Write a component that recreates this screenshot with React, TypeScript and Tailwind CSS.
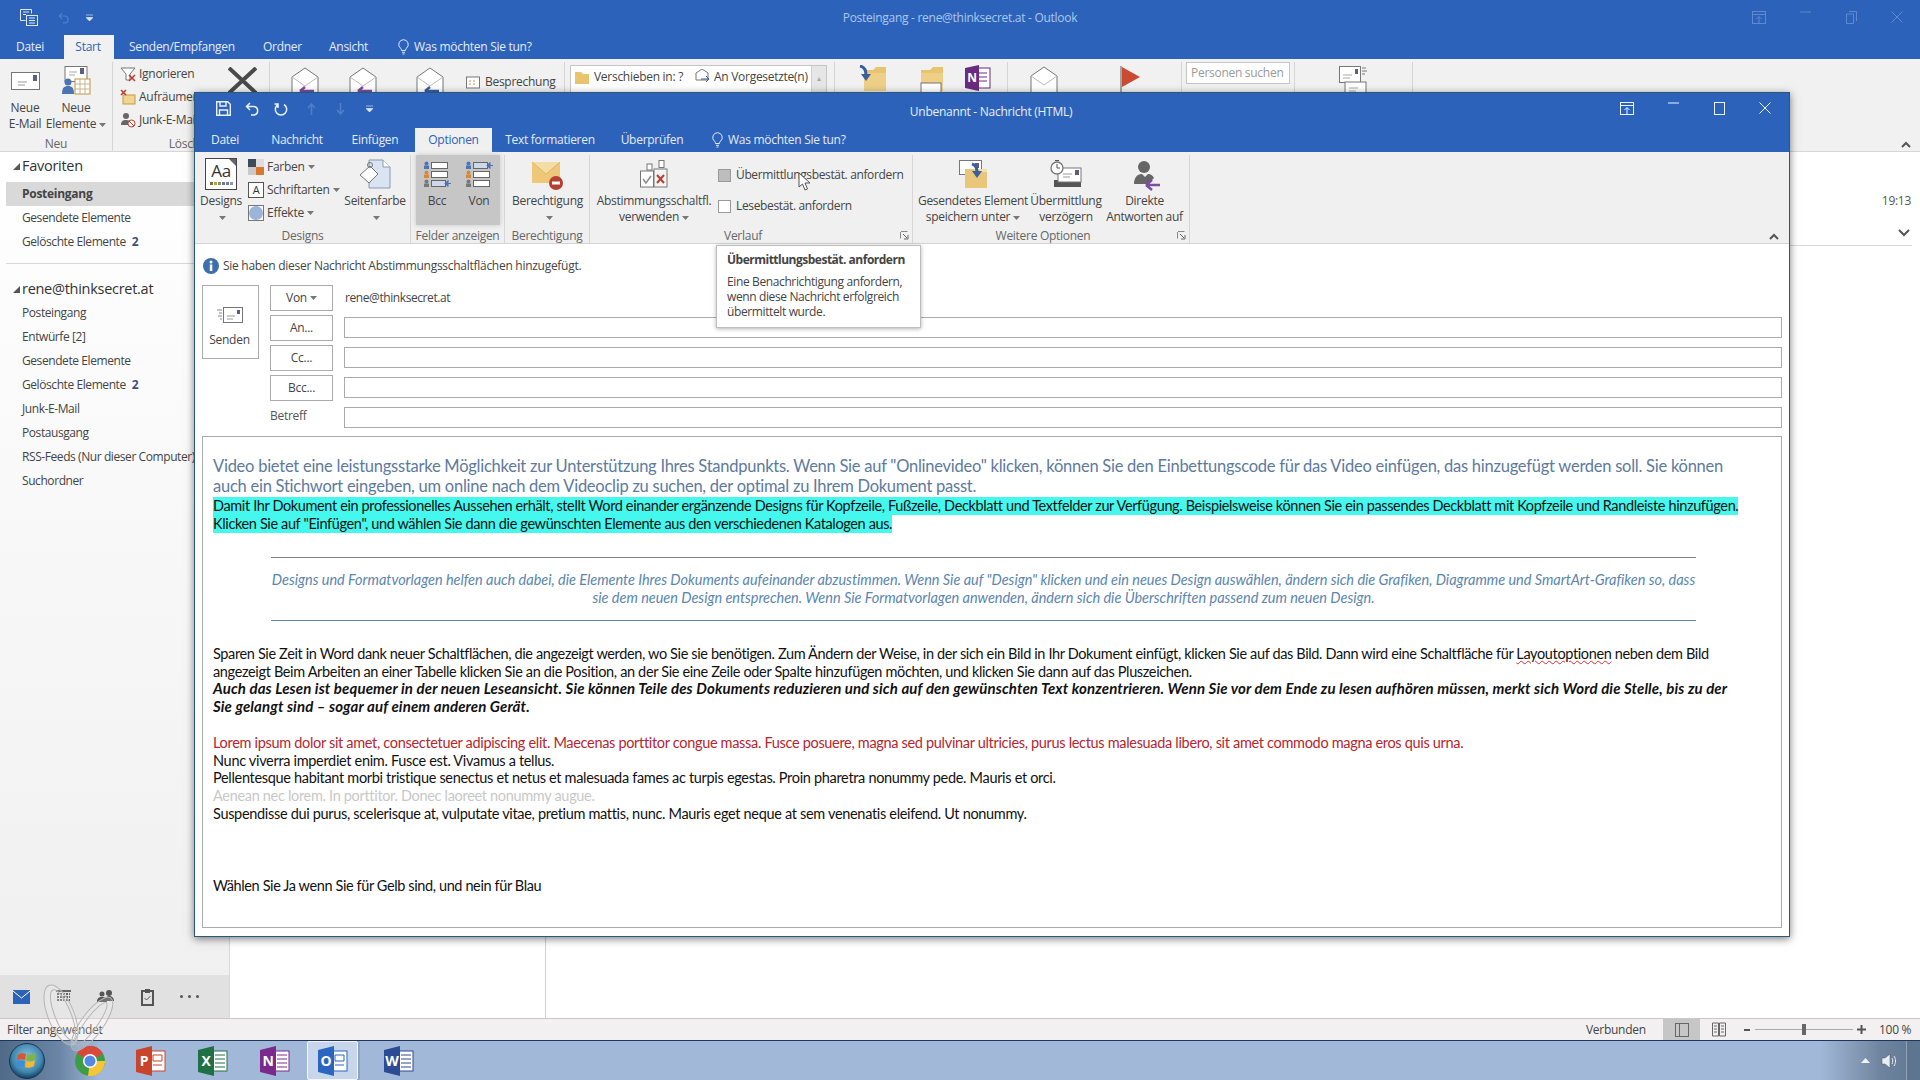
import { ReactNode } from 'react';

const ui = "font-['Open_Sans',sans-serif] text-[12px] tracking-[-0.28px]";

const Caret = () => (
  <svg width="7" height="4" viewBox="0 0 7 4" className="inline-block ml-[3px] align-middle"><path d="M0 0h7L3.500 4z" fill="#777" /></svg>
);

const RibbonGroup = ({ w, label, labelClass = '', launcher, children }: { w: string; label?: string; labelClass?: string; launcher?: boolean; children: ReactNode }) => (
  <div className={`${w} shrink-0 mt-[3px] border-r border-[#d6d6d6] flex flex-col`}>
    <div className="flex-1 flex min-h-0">{children}</div>
    <div className={`relative h-[16px] leading-[18px] text-center text-[#666] whitespace-nowrap ${labelClass}`}>
      {label}
      {launcher && (
        <svg width="9" height="9" viewBox="0 0 9 9" className="absolute right-[3px] top-[4px]"><path d="M1 .5h6.500M.5 1v6.500" stroke="#888" fill="none" /><path d="M3 3l4 4M8 4v4H4" stroke="#666" fill="none" /></svg>
      )}
    </div>
  </div>
);

const BigButton = ({ w, icon, line1, line2, caret }: { w: string; icon: ReactNode; line1: string; line2?: string; caret?: boolean }) => (
  <div className={`${w} shrink-0 flex flex-col items-center text-[#444] leading-[16px] whitespace-nowrap`}>
    <div className="h-[38px] flex items-center justify-center">{icon}</div>
    <div>{line1}</div>
    <div>{line2}{caret && <Caret />}</div>
  </div>
);

const SmallRow = ({ icon, text, caret }: { icon: ReactNode; text: string; caret?: boolean }) => (
  <div className="h-[23px] flex items-center gap-[3px] text-[#444] whitespace-nowrap">
    {icon}<span>{text}{caret && <Caret />}</span>
  </div>
);

/* ---- ribbon drawings ---- */
const Envelope = ({ w = 29, h = 18 }: { w?: number; h?: number }) => (
  <svg width={w} height={h} viewBox="0 0 29 18">
    <rect x=".5" y=".5" width="28" height="17" fill="#fff" stroke="#757575" />
    <path d="M7 10h9M7 13h7" stroke="#999" />
    <rect x="22" y="3" width="4" height="6" fill="#5a5f80" />
  </svg>
);

const OpenEnvelope = ({ arrow }: { arrow?: string }) => (
  <svg width="30" height="28" viewBox="0 0 30 28">
    <path d="M2 10 15 1l13 9v17H2z" fill="#fff" stroke="#777" />
    <path d="M2 10l13 9 13-9" fill="none" stroke="#bbb" />
    {arrow && <path d="M10 24h14M10 24l5-4M10 24l5 4" stroke={arrow} strokeWidth="2.500" fill="none" />}
  </svg>
);

const Folder = ({ children }: { children?: ReactNode }) => (
  <svg width="30" height="28" viewBox="0 0 30 28">
    <path d="M6 5h9l3-3h10v24H6z" fill="#e8c46e" />
    <path d="M6 8h22v18H6z" fill="#edcf87" />
    {children}
  </svg>
);

const NeueElemente = () => (
  <svg width="30" height="30" viewBox="0 0 30 30">
    <rect x="4" y=".5" width="22" height="15" fill="#fff" stroke="#777" />
    <path d="M8 6h8M8 9h6" stroke="#aaa" />
    <rect x="19" y="2" width="4" height="6" fill="#5a5f80" />
    <rect x="14" y="13" width="15" height="15" fill="#fff" stroke="#c8953e" />
    <path d="M14 18h15M19 13v15M24 13v15M14 23h15" stroke="#c8b58b" />
    <circle cx="7" cy="16" r="3.500" fill="#4a74b4" />
    <path d="M1 28c0-6 2-8 6-8s6 2 6 8z" fill="#4a74b4" />
  </svg>
);

const Aa = () => (
  <div className="w-[32px] h-[32px] border border-[#444] bg-white relative flex flex-col items-center p-[2px]">
    <div className="text-[17px] leading-[20px] text-[#333] font-['Open_Sans',sans-serif]">Aa</div>
    <div className="flex gap-[1px] mt-[1px]">
      {['#8a6d3b', '#b8a050', '#7f9a55', '#7c6aa0', '#5b86b0', '#9a9a9a'].map((c) => <div key={c} className="w-[3px] h-[3px]" style={{ background: c }} />)}
    </div>
    <svg width="7" height="7" className="absolute right-0 top-0"><path d="M0 0h7v7z" fill="#666" /></svg>
  </div>
);

const FieldList = ({ mark }: { mark: 0 | 2 }) => {
  const rows = [1, 10, 19];
  const colors = ['#4a74b4', '#d6883a', '#777'];
  return (
    <svg width="28" height="26" viewBox="0 0 28 26">
      {rows.map((y, i) => (
        <g key={y}>
          <circle cx="3.500" cy={y + 1.500} r="2" fill={colors[i]} />
          <rect x="1" y={y + 3.500} width="5" height="3.500" fill={colors[i]} />
          <rect x="8.500" y={y + .5} width={i === mark ? 14 : 16} height="6" fill={i === mark ? '#cfd8ea' : '#fff'} stroke="#666" />
          {i === mark && <path d={`M28 ${y + 3.500}h-6l3-3v6l-3-3`} fill="#4a74b4" stroke="#4a74b4" />}
        </g>
      ))}
    </svg>
  );
};

const Seitenfarbe = () => (
  <svg width="32" height="30" viewBox="0 0 32 30">
    <path d="M10 1h14l7 7v21H10z" fill="#d9e3f2" stroke="#8a99b0" />
    <path d="M24 1v7h7" fill="#fff" stroke="#8a99b0" />
    <path d="M1 16 11 7l8 8-9 9z" fill="#fff" stroke="#777" />
    <circle cx="11" cy="6" r="2.500" fill="none" stroke="#777" />
  </svg>
);

const Berechtigung = () => (
  <svg width="31" height="28" viewBox="0 0 31 28" className="mt-[4px]">
    <rect x="0" y="0" width="28" height="21" fill="#eec878" />
    <path d="M0 0l14 12L28 0" fill="#f4dca6" stroke="#e0b863" />
    <circle cx="24" cy="21" r="7" fill="#b5402f" />
    <rect x="20" y="19.500" width="8" height="3" fill="#fff" />
  </svg>
);

const Ballot = () => (
  <svg width="28" height="28" viewBox="0 0 28 28">
    <rect x="7" y="4" width="5" height="6" fill="#fff" stroke="#777" />
    <rect x="19" y=".5" width="5" height="7" fill="#fff" stroke="#777" />
    <rect x=".5" y="11" width="13" height="16" fill="#fff" stroke="#777" />
    <rect x="14" y="9" width="13" height="18" fill="#f4f4f4" stroke="#777" />
    <path d="M3 19l3 4 5-7" fill="none" stroke="#8a8a8a" strokeWidth="1.500" />
    <path d="M17 15l7 8M24 15l-7 8" stroke="#b5402f" strokeWidth="2" />
  </svg>
);

const SentFolder = () => (
  <svg width="29" height="29" viewBox="0 0 29 29">
    <rect x=".5" y=".5" width="22" height="14" fill="#fff" stroke="#777" />
    <rect x="16" y="3" width="4" height="5" fill="#5a5f80" />
    <path d="M6 9h22v19H6z" fill="#e9c77a" />
    <path d="M20 9h8v3h-8z" fill="#f3dfa9" />
    <path d="M13 4c4 1 5 4 5 8" stroke="#3a5f9f" strokeWidth="3" fill="none" />
    <path d="M13 11l5 7 5-7z" fill="#3a5f9f" />
  </svg>
);

const Delay = () => (
  <svg width="33" height="29" viewBox="0 0 33 29">
    <path d="M4 20h4l2-2h21v9H4z" fill="#555" />
    <rect x="8" y="8" width="23" height="14" fill="#fff" stroke="#777" />
    <path d="M13 14h9M13 17h7" stroke="#999" />
    <rect x="25" y="10" width="4" height="5" fill="#5a5f80" />
    <circle cx="7" cy="8" r="6" fill="#fff" stroke="#777" strokeWidth="1.300" />
    <path d="M7 4v4h3M5 .5h4" stroke="#555" fill="none" />
  </svg>
);

const DirectReply = () => (
  <svg width="27" height="30" viewBox="0 0 27 30" className="ml-[6px] mt-[3px]">
    <circle cx="10" cy="6" r="6" fill="#666" />
    <path d="M0 23c0-6 3-10 8-10l3 3 3-3c3 0 5 2 6 4l-6 6H1z" fill="#666" />
    <path d="M26 24H12M12 24l6-5M12 24l6 5" stroke="#7a4fa0" strokeWidth="2.500" fill="none" />
  </svg>
);

const Bulb = () => (
  <svg width="11" height="16" viewBox="0 0 11 16"><path d="M5.500.7a4.800 4.800 0 0 0-3 8.500c.7.600 1 1.300 1 2.300h4c0-1 .3-1.700 1-2.300a4.800 4.800 0 0 0-3-8.500zM4 13.300h3M4.500 15h2" fill="none" stroke="#dfe9f7" /></svg>
);

const WinControls = ({ dim }: { dim?: boolean }) => {
  const c = dim ? '#5f8ad0' : '#e8f4ff';
  return (
    <>
      <div className="w-[46px] flex justify-center"><svg width="14" height="13"><rect x=".5" y=".5" width="13" height="12" fill="none" stroke={c} /><path d="M0 3.500h14M7 12V6M4.500 8 7 5.500 9.500 8" stroke={c} fill="none" /></svg></div>
      <div className="w-[46px] flex justify-center"><svg width="11" height="2"><path d="M0 1h11" stroke={c} /></svg></div>
      <div className="w-[46px] flex justify-center">
        {dim
          ? <svg width="11" height="13"><path d="M3 .5h7.500V10M.5 3h7v9.500h-7z" fill="none" stroke={c} /></svg>
          : <svg width="11" height="13"><rect x=".5" y=".5" width="10" height="12" fill="none" stroke={c} /></svg>}
      </div>
      <div className="w-[46px] flex justify-center"><svg width="12" height="12"><path d="M.5.5l11 11M11.500.5l-11 11" stroke={c} /></svg></div>
    </>
  );
};

/* ---- taskbar drawings ---- */
const OfficeIcon = ({ color, letter, lines }: { color: string; letter: string; lines?: boolean }) => (
  <svg width="30" height="30" viewBox="0 0 30 30">
    <rect x="13" y="5" width="16" height="20" fill="#fff" stroke={color} />
    {lines ? <path d="M17 9h10M17 13h10M17 17h10M17 21h10" stroke={color} /> : <path d="M17 9h9v6h-9zM17 19h9" stroke={color} fill="none" />}
    <path d="M0 4 16 0v30L0 26z" fill={color} />
    <text x="8" y="20" textAnchor="middle" fontSize="14" fontWeight="700" fill="#fff" fontFamily="Open Sans, sans-serif">{letter}</text>
  </svg>
);

const Chrome = () => (
  <svg width="30" height="30" viewBox="0 0 30 30">
    <circle cx="15" cy="15" r="15" fill="#3f9c46" />
    <path d="M15 15 2 7.500A15 15 0 0 1 28 7.500z" fill="#d9483b" />
    <path d="M15 15h15A15 15 0 0 1 13 30z" fill="#f4c534" />
    <circle cx="15" cy="15" r="7" fill="#fff" />
    <circle cx="15" cy="15" r="5.500" fill="#5587e6" />
  </svg>
);

const Orb = () => (
  <svg width="36" height="36" viewBox="0 0 36 36">
    <defs>
      <radialGradient id="orb" cx="50%" cy="40%" r="60%"><stop offset="0" stopColor="#8cc4e0" /><stop offset=".7" stopColor="#3f86ad" /><stop offset="1" stopColor="#123f5f" /></radialGradient>
    </defs>
    <circle cx="18" cy="18" r="17.500" fill="url(#orb)" stroke="#1a3550" />
    <path d="M9 12c3-2 5-2 8-1l-1 6c-3-1-5-1-8 0z" fill="#e0532f" />
    <path d="M18 11c3 1 6 1 9-1l-1 6c-3 2-6 2-9 1z" fill="#7db742" />
    <path d="M8 18c3-1 5-1 8 0l-1 6c-3-1-5-1-8 1z" fill="#3b8fd8" />
    <path d="M17 18c3 1 6 1 9-1l-1 6c-3 2-6 2-9 1z" fill="#f2bb2e" />
  </svg>
);

const Butterfly = () => (
  <svg width="84" height="72" viewBox="0 0 84 72" className="absolute left-[36px] top-[982px]" fill="rgba(255,255,255,.18)" stroke="#b5b5b5">
    <ellipse cx="25" cy="33" rx="13" ry="32" transform="rotate(-22 25 33)" />
    <ellipse cx="27" cy="33" rx="8" ry="27" transform="rotate(-22 27 33)" fill="none" />
    <ellipse cx="56" cy="42" rx="11" ry="32" transform="rotate(36 56 42)" />
    <ellipse cx="55" cy="42" rx="6" ry="26" transform="rotate(36 55 42)" fill="none" />
  </svg>
);

/* ---- outlook main window parts ---- */
const FolderRow = ({ children, bold, active, mt = '' }: { children: ReactNode; bold?: boolean; active?: boolean; mt?: string }) => (
  <div className={`h-[24px] leading-[24px] pl-[22px] whitespace-nowrap overflow-hidden text-[#444] ${mt} ${active ? 'ml-[6px] !pl-[16px] bg-[#d9d9d9] text-[#333]' : 'tracking-[-0.42px]'} ${bold ? 'font-bold' : ''}`}>{children}</div>
);

const Count = ({ n }: { n: number }) => <span className="ml-[6px] font-bold text-[#3d4f80]">{n}</span>;

const Triangle = () => <svg width="7" height="7" className="mr-[2px]"><path d="M0 7h7V0z" fill="#555" /></svg>;

const MainRibbon = () => (
  <div className="h-[93px] bg-[#f1f1f1] border-b border-[#d6d6d6] flex">
    <RibbonGroup w="w-[113px]" label="Neu">
      <BigButton w="w-[50px]" icon={<Envelope />} line1="Neue" line2="E-Mail" />
      <BigButton w="w-[52px]" icon={<NeueElemente />} line1="Neue" line2="Elemente" caret />
    </RibbonGroup>
    <RibbonGroup w="w-[157px]" label="Löschen">
      <div className="pl-[7px]">
        <SmallRow text="Ignorieren" icon={<svg width="16" height="16"><path d="M1 2h14l-5 6v6H6V8z" fill="#fff" stroke="#777" /><path d="M9 9l6 6M15 9l-6 6" stroke="#c0392b" strokeWidth="1.500" /></svg>} />
        <SmallRow text="Aufräumen" icon={<svg width="16" height="16"><rect x="3" y="6" width="12" height="9" fill="#f1d593" stroke="#c89a45" /><path d="M1 1l5 5M6 1 1 6" stroke="#c0392b" strokeWidth="1.500" /></svg>} />
        <SmallRow text="Junk-E-Mail" icon={<svg width="16" height="16"><circle cx="6" cy="4" r="3" fill="#666" /><path d="M1 13c0-4 2-5 5-5s4 1 4 3v2z" fill="#666" /><circle cx="11.500" cy="11.500" r="3.500" fill="#fff" stroke="#c0392b" /><path d="M9 9l5 5" stroke="#c0392b" /></svg>} />
      </div>
      <div className="ml-[28px] pt-[5px]"><svg width="29" height="27"><path d="M1 1l27 25M28 1 1 26" stroke="#4a4a4a" strokeWidth="4" /></svg></div>
    </RibbonGroup>
    <RibbonGroup w="w-[295px]">
      <div className="flex gap-[28px] pl-[20px] pt-[5px]">
        <OpenEnvelope arrow="#7a4fa0" />
        <OpenEnvelope arrow="#7a4fa0" />
        <div className="ml-[9px]"><OpenEnvelope arrow="#3a5f9f" /></div>
      </div>
      <div className="ml-[21px] pt-[11px] flex items-start gap-[5px] text-[#444]">
        <svg width="14" height="14" className="mt-[2px]"><rect x=".5" y="2" width="13" height="11" fill="#fff" stroke="#777" /><path d="M3 6h2M7 6h2M3 9h2M7 9h2" stroke="#c89a45" /></svg>
        <span>Besprechung</span>
      </div>
    </RibbonGroup>
    <RibbonGroup w="w-[270px]">
      <div className="ml-[5px] mt-[3px] w-[257px] h-[60px] bg-white border border-[#c6c6c6] flex">
        <div className="flex-1 flex items-start pt-[2px] pl-[3px] text-[#444] whitespace-nowrap">
          <svg width="16" height="16" className="mt-[1px]"><path d="M1 3h6l2 2h6v10H1z" fill="#e8c46e" /></svg>
          <span className="ml-[4px] w-[101px]">Verschieben in: ?</span>
          <svg width="15" height="14" className="mt-[1px]"><path d="M1 4l6-4 6 4v7H1z" fill="#fff" stroke="#777" /><path d="M6 10h8M11 7l3 3-3 3" stroke="#3a5f9f" fill="none" /></svg>
          <span className="ml-[4px]">An Vorgesetzte(n)</span>
        </div>
        <div className="w-[15px] bg-[#e6e6e6] border-l border-[#d0d0d0] text-center text-[8px] text-[#aaa] pt-[6px]">▴</div>
      </div>
    </RibbonGroup>
    <RibbonGroup w="w-[173px]">
      <div className="flex pl-[23px] pt-[3px] gap-[27px] items-start">
        <Folder><path d="M2 1c5 1 6 5 6 9" stroke="#3a5f9f" strokeWidth="3" fill="none" /><path d="M3 9l5 7 5-7z" fill="#3a5f9f" /></Folder>
        <Folder><rect x="6" y="18" width="20" height="10" fill="#fff" stroke="#777" /></Folder>
        <svg width="26" height="26" viewBox="0 0 26 26" className="-ml-[7px]"><rect x="11" y="3" width="14" height="20" fill="#fff" stroke="#6b2a82" /><path d="M14 8h8M14 12h8M14 16h8" stroke="#6b2a82" /><path d="M0 3 14 0v26L0 23z" fill="#6b2a82" /><text x="7" y="17" fontSize="12" fontWeight="700" textAnchor="middle" fill="#fff">N</text></svg>
      </div>
    </RibbonGroup>
    <RibbonGroup w="w-[174px]">
      <div className="flex pl-[21px] pt-[4px] items-start">
        <OpenEnvelope />
        <svg width="22" height="26" className="ml-[61px]"><path d="M1 0v26" stroke="#555" /><path d="M2 1l18 10L2 21z" fill="#cb4a32" /></svg>
      </div>
    </RibbonGroup>
    <RibbonGroup w="w-[113px]">
      <div className="pl-[4px] w-full pr-[4px]">
        <div className="h-[22px] bg-white border border-[#c6c6c6] pl-[4px] leading-[20px] text-[#9a9a9a] whitespace-nowrap">Personen suchen</div>
      </div>
    </RibbonGroup>
    <RibbonGroup w="w-[118px]">
      <div className="pl-[44px] pt-[4px]">
        <svg width="30" height="28" viewBox="0 0 30 28"><rect x=".5" y=".5" width="21" height="16" fill="#fff" stroke="#777" /><path d="M4 9h9M4 12h7" stroke="#aaa" /><rect x="16" y="3" width="3" height="5" fill="#5a5f80" /><path d="M23 2h4M23 5h5M23 8h3" stroke="#777" /><rect x="6" y="16" width="21" height="14" fill="#fff" stroke="#777" /><path d="M10 22h9M10 25h7" stroke="#aaa" /></svg>
      </div>
    </RibbonGroup>
    <div className="flex-1 flex items-end justify-end pr-[9px] pb-[3px]">
      <svg width="10" height="7"><path d="M1 6l4-4 4 4" stroke="#555" strokeWidth="2" fill="none" /></svg>
    </div>
  </div>
);

const ComposeRibbon = () => (
  <div className="h-[92px] bg-[#f0f0f0] border-b border-[#d4d4d4] flex">
    <RibbonGroup w="w-[216px]" label="Designs">
      <BigButton w="w-[52px]" icon={<Aa />} line1="Designs" caret />
      <div className="w-[93px] pl-[1px]">
        <SmallRow text="Farben" caret icon={<svg width="16" height="16"><rect width="8" height="8" fill="#3c4a5c" /><rect x="8" width="8" height="8" fill="#ddd" /><rect y="8" width="8" height="8" fill="#c9c9c9" /><rect x="8" y="8" width="8" height="8" fill="#d9772e" /></svg>} />
        <SmallRow text="Schriftarten" caret icon={<div className="w-[16px] h-[16px] border border-[#555] bg-white text-center leading-[14px] text-[11px] text-[#333]">A</div>} />
        <SmallRow text="Effekte" caret icon={<div className="w-[16px] h-[16px] border border-[#777] bg-white flex items-center justify-center"><div className="w-[14px] h-[14px] rounded-full bg-[#9db4da]" /></div>} />
      </div>
      <BigButton w="w-[70px]" icon={<Seitenfarbe />} line1="Seitenfarbe" caret />
    </RibbonGroup>
    <RibbonGroup w="w-[94px]" label="Felder anzeigen">
      <div className="ml-[5px] w-[84px] h-[70px] bg-[#c6c6c6] shadow-[0_0_5px_#c6c6c6] flex">
        <BigButton w="w-[42px]" icon={<FieldList mark={2} />} line1="Bcc" />
        <BigButton w="w-[42px]" icon={<FieldList mark={0} />} line1="Von" />
      </div>
    </RibbonGroup>
    <RibbonGroup w="w-[85px]" label="Berechtigung">
      <BigButton w="w-[85px]" icon={<Berechtigung />} line1="Berechtigung" caret />
    </RibbonGroup>
    <RibbonGroup w="w-[323px]" label="Verlauf" labelClass="pr-[16px]" launcher>
      <BigButton w="w-[128px]" icon={<Ballot />} line1="Abstimmungsschaltfl." line2="verwenden" caret />
      <div className="pt-[8px] flex flex-col gap-[7px] text-[#444] whitespace-nowrap tracking-[-0.36px]">
        <div className="h-[24px] flex items-center gap-[5px]"><div className="w-[13px] h-[13px] bg-[#bdbdbd] border border-[#9a9a9a]" />Übermittlungsbestät. anfordern</div>
        <div className="h-[24px] flex items-center gap-[5px]"><div className="w-[13px] h-[13px] bg-white border border-[#9a9a9a]" />Lesebestät. anfordern</div>
      </div>
    </RibbonGroup>
    <RibbonGroup w="w-[277px]" label="Weitere Optionen" labelClass="pr-[16px]" launcher>
      <BigButton w="w-[120px]" icon={<SentFolder />} line1="Gesendetes Element" line2="speichern unter" caret />
      <BigButton w="w-[66px]" icon={<Delay />} line1="Übermittlung" line2="verzögern" />
      <BigButton w="w-[91px]" icon={<DirectReply />} line1="Direkte" line2="Antworten auf" />
    </RibbonGroup>
    <div className="flex-1 flex items-end justify-end pr-[10px] pb-[3px]">
      <svg width="10" height="7"><path d="M1 6l4-4 4 4" stroke="#555" strokeWidth="2" fill="none" /></svg>
    </div>
  </div>
);

const HeaderButton = ({ children }: { children: ReactNode }) => (
  <div className="w-[63px] h-[26px] shrink-0 border border-[#ababab] bg-white flex items-center justify-center text-[#444]">{children}</div>
);

const HeaderField = () => <input readOnly className="flex-1 h-[21px] ml-[11px] mt-[2px] border border-[#ababab] bg-white outline-none" />;

const Line = ({ children, className = '' }: { children: ReactNode; className?: string }) => (
  <div className={`whitespace-nowrap ${className}`}>{children}</div>
);

const Editor = () => (
  <div className="flex-1 border border-[#ababab] bg-white pl-[10px] pt-[19px] font-['Lato',sans-serif] text-[14.5px] leading-[17.7px] tracking-[-0.32px] text-[#111] overflow-hidden">
    <div className="text-[#5d7a9e] text-[16.5px] leading-[20px] tracking-[-0.25px]">
      <Line>Video bietet eine leistungsstarke Möglichkeit zur Unterstützung Ihres Standpunkts. Wenn Sie auf "Onlinevideo" klicken, können Sie den Einbettungscode für das Video einfügen, das hinzugefügt werden soll. Sie können</Line>
      <Line>auch ein Stichwort eingeben, um online nach dem Videoclip zu suchen, der optimal zu Ihrem Dokument passt.</Line>
    </div>
    <div className="leading-[18px] mt-[1px] tracking-[-0.37px]">
      <Line className="w-fit bg-[#44f8ee]">Damit Ihr Dokument ein professionelles Aussehen erhält, stellt Word einander ergänzende Designs für Kopfzeile, Fußzeile, Deckblatt und Textfelder zur Verfügung. Beispielsweise können Sie ein passendes Deckblatt mit Kopfzeile und Randleiste hinzufügen.</Line>
      <Line className="w-fit bg-[#44f8ee]">Klicken Sie auf "Einfügen", und wählen Sie dann die gewünschten Elemente aus den verschiedenen Katalogen aus.</Line>
    </div>
    <div className="ml-[58px] w-[1425px] mt-[24px] border-t border-[#808080] pt-[13px] pb-[13px] text-center italic text-[#5b86b0] leading-[18px] tracking-[-0.03px]">
      <Line>Designs und Formatvorlagen helfen auch dabei, die Elemente Ihres Dokuments aufeinander abzustimmen. Wenn Sie auf "Design" klicken und ein neues Design auswählen, ändern sich die Grafiken, Diagramme und SmartArt-Grafiken so, dass</Line>
      <Line>sie dem neuen Design entsprechen. Wenn Sie Formatvorlagen anwenden, ändern sich die Überschriften passend zum neuen Design.</Line>
    </div>
    <div className="ml-[58px] w-[1425px] border-t border-[#5b86b0]" />
    <div className="mt-[24px]">
      <Line className="tracking-[-0.365px]">Sparen Sie Zeit in Word dank neuer Schaltflächen, die angezeigt werden, wo Sie sie benötigen. Zum Ändern der Weise, in der sich ein Bild in Ihr Dokument einfügt, klicken Sie auf das Bild. Dann wird eine Schaltfläche für <span className="underline decoration-wavy decoration-[#d03030] decoration-1">Layoutoptionen</span> neben dem Bild</Line>
      <Line className="tracking-[-0.35px]">angezeigt Beim Arbeiten an einer Tabelle klicken Sie an die Position, an der Sie eine Zeile oder Spalte hinzufügen möchten, und klicken Sie dann auf das Pluszeichen.</Line>
      <Line className="font-bold italic text-[15px] tracking-[0.12px]">Auch das Lesen ist bequemer in der neuen Leseansicht. Sie können Teile des Dokuments reduzieren und sich auf den gewünschten Text konzentrieren. Wenn Sie vor dem Ende zu lesen aufhören müssen, merkt sich Word die Stelle, bis zu der</Line>
      <Line className="font-bold italic text-[15px] tracking-[0.12px]">Sie gelangt sind – sogar auf einem anderen Gerät.</Line>
    </div>
    <div className="mt-[18px]">
      <Line className="text-[#b5262f]">Lorem ipsum dolor sit amet, consectetuer adipiscing elit. Maecenas porttitor congue massa. Fusce posuere, magna sed pulvinar ultricies, purus lectus malesuada libero, sit amet commodo magna eros quis urna.</Line>
      <Line>Nunc viverra imperdiet enim. Fusce est. Vivamus a tellus.</Line>
      <Line>Pellentesque habitant morbi tristique senectus et netus et malesuada fames ac turpis egestas. Proin pharetra nonummy pede. Mauris et orci.</Line>
      <Line className="text-[#c8c8c8]">Aenean nec lorem. In porttitor. Donec laoreet nonummy augue.</Line>
      <Line>Suspendisse dui purus, scelerisque at, vulputate vitae, pretium mattis, nunc. Mauris eget neque at sem venenatis eleifend. Ut nonummy.</Line>
    </div>
    <Line className="mt-[55px] tracking-[-0.39px]">Wählen Sie Ja wenn Sie für Gelb sind, und nein für Blau</Line>
  </div>
);

const ComposeWindow = () => (
  <div className="absolute left-[194px] top-[92px] w-[1596px] h-[845px] bg-white border border-[#2c5878] shadow-[0_2px_8px_rgba(0,0,0,0.5)] flex flex-col">
    <div className="h-[35px] bg-[#2d62bb] grid grid-cols-[1fr_auto_1fr] items-center">
      <div className="flex items-center pl-[21px] mb-[4px]">
        <svg width="15" height="15" viewBox="0 0 15 15"><path d="M.7.7h11l2.600 2.600v11H.7zM4 1v4h6V1M3.500 14V9h8v5" fill="none" stroke="#eaf2ff" strokeWidth="1.400" /></svg>
        <svg width="15" height="14" viewBox="0 0 15 14" className="ml-[14px]"><path d="M5 1 1.500 4.500 5 8M2 4.500h7a4.300 4.300 0 0 1 0 8.500H6" fill="none" stroke="#eaf2ff" strokeWidth="1.500" /></svg>
        <svg width="15" height="14" viewBox="0 0 15 14" className="ml-[14px]"><path d="M4 2.500a5.700 5.700 0 1 0 6 0M4 6V2H.5" fill="none" stroke="#eaf2ff" strokeWidth="1.500" /></svg>
        <svg width="9" height="12" viewBox="0 0 9 12" className="ml-[18px]"><path d="M4.500 12V2M1 5l3.500-4L8 5" fill="none" stroke="#4f7fcb" strokeWidth="1.500" /></svg>
        <svg width="9" height="12" viewBox="0 0 9 12" className="ml-[20px]"><path d="M4.500 0v10M1 7l3.500 4L8 7" fill="none" stroke="#4f7fcb" strokeWidth="1.500" /></svg>
        <svg width="7" height="7" viewBox="0 0 7 7" className="ml-[21px]"><path d="M0 1h7M0 3.500h7l-3.500 3.500z" fill="#dfe9f7" stroke="#dfe9f7" strokeWidth=".6" /></svg>
      </div>
      <div className="text-[#e6f0fb] whitespace-nowrap mt-[2px] -ml-[2px]">Unbenannt - Nachricht (HTML)</div>
      <div className="flex justify-end pr-[1px] mb-[4px]"><WinControls /></div>
    </div>
    <div className="h-[24px] bg-[#2d62bb] flex items-center text-[#e4ecf7] whitespace-nowrap">
      <div className="w-[64px] pl-[16px]">Datei</div>
      <div className="w-[76px] text-center">Nachricht</div>
      <div className="w-[80px] text-center">Einfügen</div>
      <div className="w-[77px] h-full leading-[24px] text-center bg-[#f0f0f0] text-[#2d62bb]">Optionen</div>
      <div className="w-[116px] text-center">Text formatieren</div>
      <div className="w-[88px] text-center">Überprüfen</div>
      <div className="flex items-center gap-[5px] ml-[16px]"><Bulb />Was möchten Sie tun?</div>
    </div>
    <ComposeRibbon />
    <div className="flex-1 min-h-0 flex flex-col pl-[7px] pr-[7px] pb-[8px] text-[#444]">
      <div className="h-[41px] flex items-center gap-[4px] pl-[1px] pt-[2px] shrink-0">
        <svg width="16" height="16" viewBox="0 0 16 16"><circle cx="8" cy="8" r="8" fill="#3d6fb0" /><rect x="6.800" y="6.500" width="2.500" height="6.500" fill="#fff" /><circle cx="8" cy="4" r="1.500" fill="#fff" /></svg>
        Sie haben dieser Nachricht Abstimmungsschaltflächen hinzugefügt.
      </div>
      <div className="flex shrink-0">
        <div className="w-[57px] h-[74px] border border-[#ababab] flex flex-col items-center pr-[2px] shrink-0">
          <div className="mt-[21px] h-[18px]"><svg width="27" height="18" viewBox="0 0 27 18"><rect x="7.500" y=".5" width="19" height="15" fill="#fff" stroke="#777" /><path d="M11 9h8M11 12h6" stroke="#999" /><rect x="21" y="3" width="3" height="4" fill="#5a5f80" /><path d="M1 3h5M3 6h3M2 9h4M4 12h2" stroke="#888" /></svg></div>
          <div className="mt-[6px]">Senden</div>
        </div>
        <div className="flex-1 ml-[11px] flex flex-col gap-[4px]">
          <div className="flex items-center">
            <HeaderButton>Von<Caret /></HeaderButton>
            <span className="ml-[12px] tracking-[-0.42px]">rene@thinksecret.at</span>
          </div>
          <div className="flex items-start"><HeaderButton>An...</HeaderButton><HeaderField /></div>
          <div className="flex items-start"><HeaderButton>Cc...</HeaderButton><HeaderField /></div>
          <div className="flex items-start"><HeaderButton>Bcc...</HeaderButton><HeaderField /></div>
          <div className="flex items-start h-[26px]"><div className="w-[63px] shrink-0 text-[#555] leading-[22px]">Betreff</div><HeaderField /></div>
        </div>
      </div>
      <div className="h-[5px] shrink-0" />
      <Editor />
    </div>
    {/* tooltip hangs under the hovered checkbox */}
    <div className="absolute left-[521px] top-[152px] w-[205px] h-[83px] bg-white border border-[#bdbdbd] shadow-[0_1px_4px_rgba(0,0,0,0.3)] pl-[10px] pt-[6px] text-[#444] leading-[15px] tracking-[-0.38px]">
      <div className="font-bold mb-[6px] leading-[16px] whitespace-nowrap tracking-[-0.5px]">Übermittlungsbestät. anfordern</div>
      <div className="whitespace-nowrap">Eine Benachrichtigung anfordern,</div>
      <div className="whitespace-nowrap">wenn diese Nachricht erfolgreich</div>
      <div className="whitespace-nowrap">übermittelt wurde.</div>
    </div>
    {/* mouse pointer */}
    <svg width="14" height="19" viewBox="0 0 14 19" className="absolute left-[603px] top-[79px]"><path d="M1 1v14l3.500-3 2.500 6 2.500-1-2.500-6H12z" fill="#fff" stroke="#555" /></svg>
  </div>
);

export default function App() {
  return (
    <div className={`relative w-[1920px] h-[1080px] overflow-hidden flex flex-col bg-white ${ui}`}>
      <div className="h-[35px] bg-[#2d62bb] grid grid-cols-[1fr_auto_1fr] items-center">
        <div className="flex items-center pl-[20px] text-[#dfe9f7]">
          <svg width="18" height="17" viewBox="0 0 18 17"><path d="M.5.5h11v4M.5.5v11h5M3 3h6M3 5.500h3" fill="none" stroke="#dfe9f7" /><rect x="6.500" y="6.500" width="11" height="10" fill="none" stroke="#dfe9f7" /><path d="M9 9h6M9 11.500h6M9 14h6" stroke="#dfe9f7" /></svg>
          <svg width="12" height="12" viewBox="0 0 15 14" className="ml-[20px]"><path d="M5 1 1.500 4.500 5 8M2 4.500h7a4.300 4.300 0 0 1 0 8.500H6" fill="none" stroke="#4f7fcb" strokeWidth="1.500" /></svg>
          <svg width="7" height="7" viewBox="0 0 7 7" className="ml-[16px]"><path d="M0 1h7M0 3.500h7l-3.500 3.500z" fill="#dfe9f7" stroke="#dfe9f7" strokeWidth=".6" /></svg>
        </div>
        <div className="text-[#a9c8ee] whitespace-nowrap">Posteingang - rene@thinksecret.at - Outlook</div>
        <div className="flex justify-end"><WinControls dim /></div>
      </div>
      <div className="h-[24px] bg-[#2d62bb] flex items-center text-[#e4ecf7] whitespace-nowrap">
        <div className="w-[64px] pl-[16px]">Datei</div>
        <div className="w-[50px] h-full leading-[24px] text-center pr-[2px] bg-[#f1f1f1] text-[#2d62bb]">Start</div>
        <div className="ml-[15px] w-[105px]">Senden/Empfangen</div>
        <div className="ml-[29px] w-[37px]">Ordner</div>
        <div className="ml-[29px] w-[40px]">Ansicht</div>
        <div className="ml-[29px] flex items-center gap-[5px]"><Bulb />Was möchten Sie tun?</div>
      </div>
      <MainRibbon />
      <div className="h-[866px] flex">
        <div className="w-[230px] flex flex-col border-r border-[#d8d8d8]">
          <div className="flex-1 bg-gradient-to-b from-white to-[#f0f0f0]">
            <div className="h-[2px]" />
            <div className="h-[24px] pl-[13px] flex items-center text-[14.5px] text-[#333]"><Triangle />Favoriten</div>
            <FolderRow bold active mt="mt-[4px]">Posteingang</FolderRow>
            <FolderRow>Gesendete Elemente</FolderRow>
            <FolderRow>Gelöschte Elemente<Count n={2} /></FolderRow>
            <div className="mt-[9px] ml-[6px] border-b border-[#d8d8d8]" />
            <div className="mt-[13px] h-[24px] pl-[13px] flex items-center text-[14.5px] text-[#333]"><Triangle />rene@thinksecret.at</div>
            <FolderRow>Posteingang</FolderRow>
            <FolderRow>Entwürfe [2]</FolderRow>
            <FolderRow>Gesendete Elemente</FolderRow>
            <FolderRow>Gelöschte Elemente<Count n={2} /></FolderRow>
            <FolderRow>Junk-E-Mail</FolderRow>
            <FolderRow>Postausgang</FolderRow>
            <FolderRow>RSS-Feeds (Nur dieser Computer)</FolderRow>
            <FolderRow>Suchordner</FolderRow>
          </div>
          <div className="h-[43px] bg-[#e1e1e1] flex items-center">
            <div className="w-[42px] flex justify-center"><svg width="17" height="14" viewBox="0 0 17 14"><rect width="17" height="14" fill="#2d62bb" /><path d="M0 1l8.500 7L17 1" fill="none" stroke="#fff" /></svg></div>
            <div className="w-[42px] flex justify-center"><svg width="15" height="13" viewBox="0 0 15 13"><rect width="15" height="2" fill="#666" /><path d="M1 4h13M1 7h13M1 10h13" stroke="#666" strokeWidth="2" strokeDasharray="2 1" /></svg></div>
            <div className="w-[42px] flex justify-center"><svg width="17" height="13" viewBox="0 0 17 13"><circle cx="5" cy="4" r="2.500" fill="#555" /><circle cx="12" cy="3" r="3" fill="#555" /><path d="M0 12c0-4 2-5 5-5s5 1 5 5zM8 9c1-2 2-3 4-3s5 1 5 5H10z" fill="#555" /></svg></div>
            <div className="w-[42px] flex justify-center"><svg width="13" height="18" viewBox="0 0 13 18"><rect x="1" y="3" width="11" height="14" fill="none" stroke="#555" strokeWidth="2" /><rect x="4" y="1" width="5" height="4" fill="#555" /><path d="M3.500 10l2 2 4-4" fill="none" stroke="#555" /></svg></div>
            <div className="w-[42px] flex justify-center gap-[5px]">{[0, 1, 2].map((d) => <div key={d} className="w-[3px] h-[3px] rounded-full bg-[#555]" />)}</div>
          </div>
        </div>
        <div className="w-[316px] bg-white border-r border-[#d0d0d0]" />
        <div className="flex-1 bg-white flex flex-col">
          <div className="h-[94px] mr-[8px] border-b border-[#d8d8d8] flex flex-col items-end pt-[41px] text-[#555]">
            <div className="h-[16px] leading-[16px] mr-[1px]">19:13</div>
            <svg width="12" height="8" className="mt-[20px] mr-[2px]"><path d="M1 1l5 5 5-5" stroke="#555" strokeWidth="2" fill="none" /></svg>
          </div>
        </div>
      </div>
      <div className="h-[22px] bg-[#f2f0f0] border-t border-[#c8c8c8] flex items-center pl-[7px] text-[#444]">
        <span>Filter angewendet</span>
        <div className="ml-auto flex items-center h-full pr-[8px]">
          <span className="w-[77px]">Verbunden</span>
          <div className="w-[37px] h-full bg-[#c6c6c6] flex items-center justify-center"><svg width="14" height="14"><rect x=".5" y=".5" width="13" height="13" fill="none" stroke="#666" /><path d="M4.500 0v14" stroke="#666" /></svg></div>
          <div className="w-[37px] flex justify-center"><svg width="14" height="15"><path d="M.5 1h6v13h-6zM7.500 1h6v13h-6z" fill="none" stroke="#666" /><path d="M2 4h3M2 7h3M2 10h3M9 4h3M9 7h3M9 10h3" stroke="#666" /></svg></div>
          <div className="w-[6px] h-[2px] bg-[#555] ml-[7px]" />
          <div className="relative w-[98px] h-[1px] bg-[#aaa] ml-[5px]"><div className="absolute left-[47px] -top-[5px] w-[4px] h-[11px] bg-[#666]" /></div>
          <svg width="9" height="9" className="ml-[4px]"><path d="M4.500 0v9M0 4.500h9" stroke="#555" strokeWidth="2" /></svg>
          <span className="ml-[13px] w-[33px]">100 %</span>
        </div>
      </div>
      <div className="h-[40px] border-t border-[#1f3560] flex items-center bg-[linear-gradient(90deg,#4f6a86_0,#6b86a6_60px,#a2b8d8_100px,#a2b8d8_1820px,#6f859f_1880px,#5f7690_100%)]">
        <div className="ml-[9px]"><Orb /></div>
        <div className="ml-[30px]"><Chrome /></div>
        <div className="ml-[31px]"><OfficeIcon color="#c8452b" letter="P" /></div>
        <div className="ml-[32px]"><OfficeIcon color="#1f7145" letter="X" lines /></div>
        <div className="ml-[32px]"><OfficeIcon color="#7a2a8c" letter="N" lines /></div>
        <div className="ml-[17px] w-[51px] h-full bg-[#c7d6ea] border border-[#f3f7fc] rounded-[2px] flex items-center justify-center shadow-[2px_0_0_#8ea4c2]"><OfficeIcon color="#2a66bf" letter="O" /></div>
        <div className="ml-[26px]"><OfficeIcon color="#2b4b94" letter="W" lines /></div>
        <div className="ml-auto flex items-center h-full">
          <svg width="9" height="5"><path d="M0 5h9L4.500 0z" fill="#eef3fa" /></svg>
          <svg width="16" height="16" viewBox="0 0 16 16" className="ml-[11px]"><path d="M1 5h3l5-4v14l-5-4H1z" fill="#e8eef6" stroke="#555" strokeWidth=".5" /><path d="M11 5c1 2 1 4 0 6M13 3c2 3 2 7 0 10" fill="none" stroke="#e8eef6" /></svg>
          <div className="ml-[9px] w-[14px] h-full bg-[#5e7590] border-l border-[#8fa2b8]" />
        </div>
      </div>
      <ComposeWindow />
      <Butterfly />
    </div>
  );
}
